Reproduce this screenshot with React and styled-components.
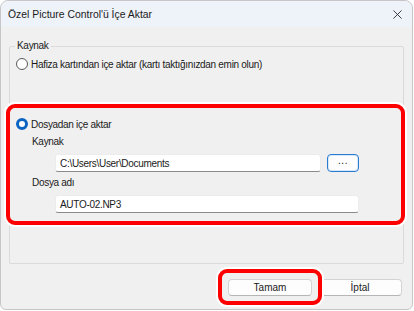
import React from 'react';
import styled, { createGlobalStyle } from 'styled-components';

const GlobalStyle = createGlobalStyle`
  html, body {
    margin: 0;
    padding: 0;
    background: #ffffff;
  }
  body {
    font-family: "Liberation Sans", Arial, sans-serif;
    font-size: 10px;
    letter-spacing: -0.3px;
    color: #1a1a1a;
  }
`;

const Window = styled.div`
  width: 413px;
  height: 310px;
  box-sizing: border-box;
  border: 1px solid #c6c6c6;
  border-radius: 8px 8px 6px 6px;
  overflow: hidden;
  background: #f0f0f0;
  display: flex;
  flex-direction: column;
`;

const TitleBar = styled.div`
  height: 26px;
  flex: none;
  background: #eef2f9;
  display: flex;
  align-items: center;
  justify-content: space-between;
  padding: 0 8px 0 7px;
  font-size: 10.4px;
  letter-spacing: 0;
  color: #1b1b1b;
`;

const CloseIcon = styled.svg`
  width: 9px;
  height: 9px;
  margin-right: 2px;
`;

const Body = styled.div`
  flex: 1;
  padding: 19px 8px 0 8px;
  display: flex;
  flex-direction: column;
`;

const GroupBox = styled.div`
  height: 218px;
  box-sizing: border-box;
  border: 1px solid #dadada;
  border-radius: 2px;
  display: flex;
  flex-direction: column;
`;

const Legend = styled.div`
  align-self: flex-start;
  margin: -8px 0 0 5px;
  padding: 0 2px;
  height: 14px;
  line-height: 14px;
  background: #f0f0f0;
`;

const RadioRow = styled.label`
  display: flex;
  align-items: center;
  gap: 3px;
  height: 14px;
  margin: ${(p) => p.$mt || 0}px 0 0 6px;
`;

const RadioDot = styled.span`
  width: 12px;
  height: 12px;
  box-sizing: border-box;
  border-radius: 50%;
  flex: none;
  border: ${(p) => (p.$checked ? '3.5px solid #0a64c2' : '1px solid #5a5a5a')};
  background: #ffffff;
`;

const Section = styled.div`
  position: relative;
  margin-top: 46px;
  display: flex;
  flex-direction: column;
`;

const Highlight = styled.div`
  position: absolute;
  box-sizing: border-box;
  top: ${(p) => p.$t}px;
  bottom: ${(p) => p.$b}px;
  left: ${(p) => p.$l}px;
  right: ${(p) => p.$r}px;
  border: 4.5px solid #ff0000;
  border-radius: 9px;
  box-shadow: 0 0 0 2px #ffffff;
  pointer-events: none;
`;

const FieldLabel = styled.div`
  height: 14px;
  line-height: 14px;
  margin: ${(p) => p.$mt}px 0 0 22px;
`;

const FieldRow = styled.div`
  display: flex;
  align-items: center;
  gap: 6px;
  margin: 5px 0 0 45px;
`;

const TextBox = styled.div`
  width: ${(p) => p.$w}px;
  height: 18px;
  box-sizing: border-box;
  background: #ffffff;
  border: 1px solid #ececec;
  border-bottom: 1px solid #8a8a8a;
  border-radius: 3px;
  padding: 0 4px;
  display: flex;
  align-items: center;
  color: #1a1a1a;
`;

const BrowseButton = styled.button`
  width: 32px;
  height: 18px;
  box-sizing: border-box;
  border: 1px solid #2a7bd0;
  box-shadow: inset 0 0 0 1px #d6e8fa;
  border-radius: 4px;
  background: #fdfdfd;
  font: inherit;
  letter-spacing: 0.5px;
  line-height: 10px;
  padding: 0 0 5px;
  color: #1a1a1a;
`;

const ButtonBar = styled.div`
  display: flex;
  justify-content: flex-end;
  gap: 6px;
  margin-top: 15px;
  padding-right: 2px;
`;

const ButtonWrap = styled.div`
  position: relative;
  display: flex;
`;

const DialogButton = styled.button`
  width: 84px;
  height: 17px;
  box-sizing: border-box;
  background: #fdfdfd;
  border: 1px solid #d3d3d3;
  border-bottom-color: #b5b5b5;
  border-radius: 4px;
  font: inherit;
  color: #1a1a1a;
  padding: 0;
  line-height: 15px;
`;

export default function App() {
  return (
    <>
      <GlobalStyle />
      <Window>
        <TitleBar>
          <span>Özel Picture Control'ü İçe Aktar</span>
          <CloseIcon viewBox="0 0 10 10">
            <path d="M0.5 0.5 L9.5 9.5 M9.5 0.5 L0.5 9.5" stroke="#2a2a2a" strokeWidth="1" fill="none" />
          </CloseIcon>
        </TitleBar>
        <Body>
          <GroupBox>
            <Legend>Kaynak</Legend>
            <RadioRow $mt={4}>
              <RadioDot />
              <span>Hafiza kartından içe aktar (kartı taktığınızdan emin olun)</span>
            </RadioRow>
            <Section>
              <Highlight $t={-13} $b={-12} $l={-4} $r={-2} />
              <RadioRow>
                <RadioDot $checked />
                <span>Dosyadan içe aktar</span>
              </RadioRow>
              <FieldLabel $mt={4}>Kaynak</FieldLabel>
              <FieldRow>
                <TextBox $w={266}>C:\Users\User\Documents</TextBox>
                <BrowseButton>...</BrowseButton>
              </FieldRow>
              <FieldLabel $mt={4}>Dosya adı</FieldLabel>
              <FieldRow>
                <TextBox $w={304}>AUTO-02.NP3</TextBox>
              </FieldRow>
            </Section>
          </GroupBox>
          <ButtonBar>
            <ButtonWrap>
              <DialogButton>Tamam</DialogButton>
              <Highlight $t={-10} $b={-9} $l={-10} $r={-10} />
            </ButtonWrap>
            <DialogButton>İptal</DialogButton>
          </ButtonBar>
        </Body>
      </Window>
    </>
  );
}
